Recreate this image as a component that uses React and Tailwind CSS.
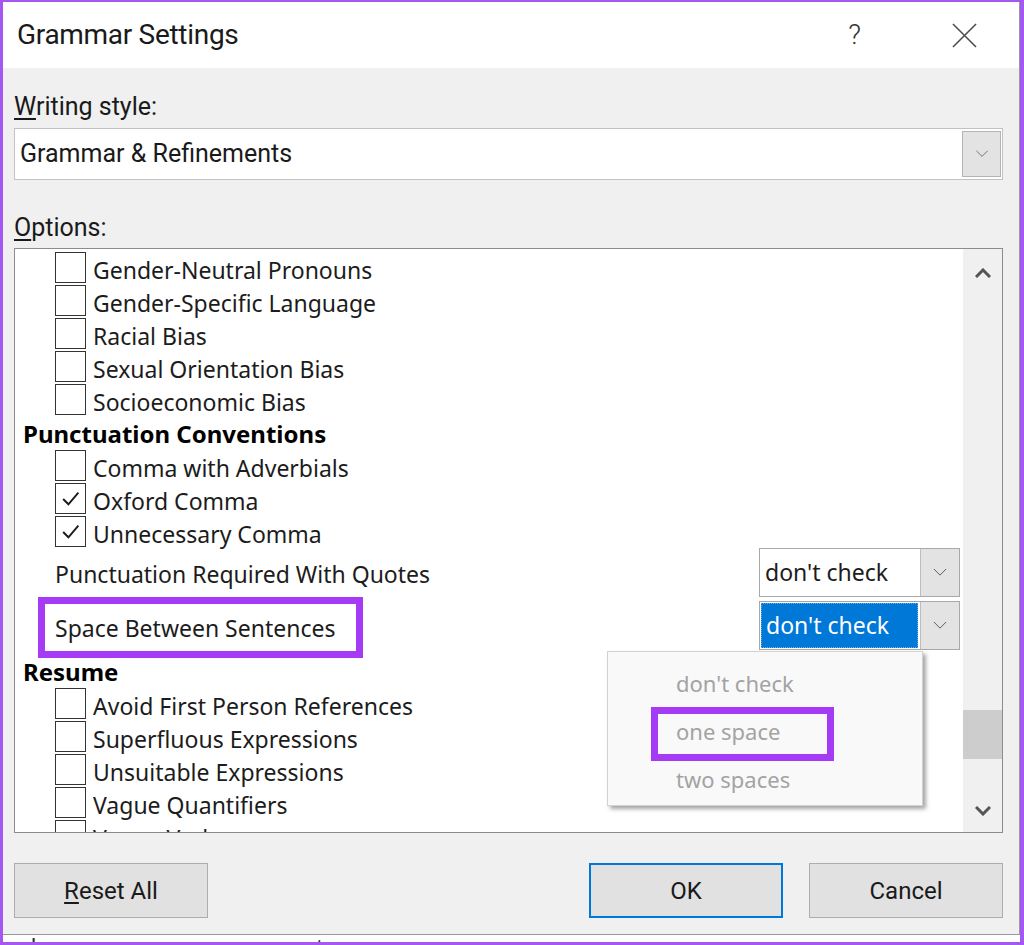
import React from 'react';

const listFont = "font-['Noto_Sans',sans-serif]";
const uiFont = "font-['Roboto',sans-serif]";

function Chevron({ up = false, className = '' }) {
  return (
    <svg viewBox="0 0 16 10" className={className} fill="none" stroke="currentColor">
      <path d={up ? 'M1 9 L8 2 L15 9' : 'M1 1 L8 8 L15 1'} />
    </svg>
  );
}

function CheckBox({ checked }) {
  return (
    <div className="w-[31px] h-[31px] border-[1.5px] border-[#333333] bg-white flex items-center justify-center shrink-0">
      {checked && (
        <svg viewBox="0 0 20 20" className="w-[21px] h-[21px]" fill="none" stroke="#1a1a1a" strokeWidth="1.8">
          <path d="M3 10.5 L8 15.5 L17.5 4.5" />
        </svg>
      )}
    </div>
  );
}

function OptionRow({ label, checked }) {
  return (
    <div className="h-[33px] shrink-0 flex items-center pl-[40px]">
      <CheckBox checked={checked} />
      <span className="ml-[7px] mt-[5px] text-[23px] text-[#1c1c1c] whitespace-nowrap">{label}</span>
    </div>
  );
}

function Heading({ children }) {
  return (
    <div className="h-[33px] shrink-0 flex items-center pl-[8px] pt-[2px] text-[24px] font-bold text-black">{children}</div>
  );
}

function Combo({ active }) {
  return (
    <div className="w-[201px] h-[49px] border border-[#a8a8a8] bg-white flex shrink-0">
      <div
        className={
          active
            ? 'flex-1 m-[1px] mr-[2px] bg-[#0078d7] border border-dotted border-[#6aa8e8] text-white flex items-center pl-[4px] text-[23px]'
            : 'flex-1 flex items-center pl-[5px] text-[23px] text-[#1c1c1c]'
        }
      >
        don't check
      </div>
      <div className="w-[39px] bg-[#e3e3e3] border-l border-[#bdbdbd] flex items-center justify-center text-[#4a4a4a]">
        <Chevron className="w-[14px] h-[9px]" />
      </div>
    </div>
  );
}

export default function App() {
  const biasItems = [
    'Gender-Neutral Pronouns',
    'Gender-Specific Language',
    'Racial Bias',
    'Sexual Orientation Bias',
    'Socioeconomic Bias',
  ];
  const resumeItems = [
    'Avoid First Person References',
    'Superfluous Expressions',
    'Unsuitable Expressions',
    'Vague Quantifiers',
    'Vague Verbs',
  ];

  return (
    <div className="w-[1024px] h-[945px] overflow-hidden border-l-[3px] border-t-[2px] border-r-[4px] border-b-[3px] border-[#a557f2] bg-[#f0f0f0] flex flex-col">
      <div className="flex-1 flex flex-col border-r border-[#9a9a9a] min-h-0">
        {/* title bar */}
        <div className={`h-[66px] bg-white flex items-center pl-[14px] shrink-0 ${uiFont}`}>
          <span className="text-[28px] text-[#1a1a1a] tracking-[-0.3px]">Grammar Settings</span>
          <span className="ml-auto mr-[91px] text-[28px] text-[#333333] font-light">?</span>
          <svg viewBox="0 0 26 26" className="w-[25px] h-[25px] mr-[42px]" fill="none" stroke="#4d4d4d" strokeWidth="1.6">
            <path d="M1 1 L25 25 M25 1 L1 25" />
          </svg>
        </div>

        {/* body */}
        <div className="flex-1 flex flex-col pl-[11px] pr-[16px] min-h-0">
          <div className={`mt-[24px] text-[25px] text-[#1a1a1a] leading-[30px] ${uiFont}`}>
            <span className="underline underline-offset-[3px]">W</span>riting style:
          </div>
          <div className="mt-[6px] h-[52px] border border-[#c2c2c2] bg-white flex items-center pr-[1px]">
            <span className={`pl-[5px] text-[25px] text-[#1a1a1a] ${uiFont}`}>Grammar &amp; Refinements</span>
            <div className="ml-auto w-[39px] h-[46px] bg-[#e3e3e3] border border-[#b3b3b3] flex items-center justify-center text-[#555555]">
              <Chevron className="w-[14px] h-[8px]" />
            </div>
          </div>
          <div className={`mt-[33px] text-[25px] text-[#1a1a1a] leading-[30px] ${uiFont}`}>
            <span className="underline underline-offset-[3px]">O</span>ptions:
          </div>

          {/* list box */}
          <div className={`mt-[5px] h-[585px] border-[1.5px] border-[#8c8c8c] bg-white flex overflow-hidden shrink-0 ${listFont}`}>
            <div className="flex-1 flex flex-col pt-[2px] overflow-hidden">
              {biasItems.map((item) => (
                <OptionRow key={item} label={item} />
              ))}
              <Heading>Punctuation Conventions</Heading>
              <OptionRow label="Comma with Adverbials" />
              <OptionRow label="Oxford Comma" checked />
              <OptionRow label="Unnecessary Comma" checked />
              <div className="h-[50px] flex items-start pr-[3px] shrink-0">
                <span className="pl-[40px] mt-[9px] text-[23px] text-[#1c1c1c]">Punctuation Required With Quotes</span>
                <div className="ml-auto">
                  <Combo />
                </div>
              </div>
              <div className="h-[56px] flex items-start pr-[3px] relative shrink-0">
                <span className="pl-[40px] mt-[13px] text-[23px] text-[#1c1c1c]">Space Between Sentences</span>
                <div className="absolute left-[23px] top-[-1px] w-[325px] h-[61px] border-[7px] border-[#a53bf5]"></div>
                <div className="ml-auto mt-[3px]">
                  <Combo active />
                </div>

                {/* open dropdown */}
                <div className="absolute left-[592px] top-[53px] w-[316px] h-[155px] bg-[#f9f9f9] border border-[#d2d2d2] shadow-[3px_3px_4px_rgba(0,0,0,0.35)] z-10 flex flex-col pl-[68px] pt-[9px] text-[22px] text-[#a3a3a3]">
                  <div className="h-[49px] leading-[44px]">don't check</div>
                  <div className="h-[49px] leading-[44px] relative">
                    one space
                    <div className="absolute left-[-25px] top-[-2px] w-[183px] h-[54px] border-[7px] border-[#a53bf5]"></div>
                  </div>
                  <div className="h-[49px] leading-[44px]">two spaces</div>
                </div>
              </div>
              <Heading>Resume</Heading>
              {resumeItems.map((item) => (
                <OptionRow key={item} label={item} />
              ))}
            </div>

            {/* scrollbar */}
            <div className="w-[39px] bg-[#f0f0f0] flex flex-col items-center shrink-0">
              <div className="h-[48px] flex items-center justify-center text-[#555555]">
                <Chevron up className="w-[16px] h-[10px] stroke-[3]" />
              </div>
              <div className="mt-[413px] w-full h-[49px] bg-[#cdcdcd]"></div>
              <div className="mt-auto h-[42px] flex items-center justify-center text-[#555555]">
                <Chevron className="w-[16px] h-[10px] stroke-[3]" />
              </div>
            </div>
          </div>

          {/* buttons */}
          <div className={`mt-[30px] flex items-center text-[24px] text-[#1a1a1a] ${uiFont}`}>
            <button className="w-[194px] h-[55px] bg-[#e1e1e1] border border-[#adadad]">
              <span className="underline underline-offset-[3px]">R</span>eset All
            </button>
            <button className="ml-auto w-[194px] h-[55px] bg-[#e1e1e1] border-2 border-[#0078d7]">OK</button>
            <button className="ml-[26px] w-[194px] h-[55px] bg-[#e1e1e1] border border-[#adadad]">Cancel</button>
          </div>
        </div>
      </div>

      {/* document behind the dialog */}
      <div className="h-[8px] bg-white border-t border-[#9a9a9a] overflow-hidden shrink-0">
        <div className={`pl-[4px] text-[24px] leading-[24px] text-[#333333] whitespace-nowrap ${listFont}`}>
          ark grammar errors as you type
        </div>
      </div>
    </div>
  );
}
